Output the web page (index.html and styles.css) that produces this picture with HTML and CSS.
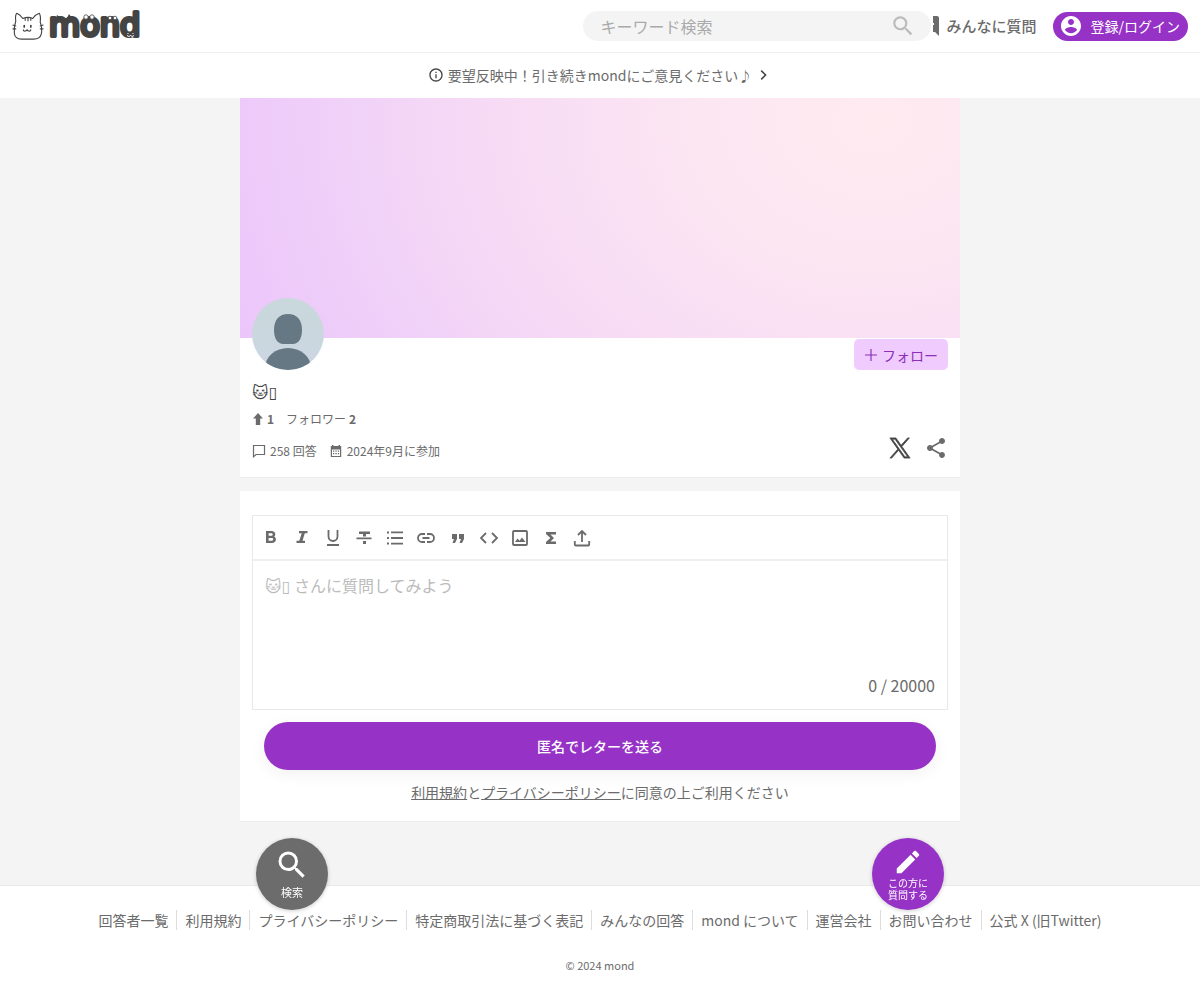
FILE: index.html
```html
<!DOCTYPE html>
<html lang="ja">
<head>
  <meta charset="UTF-8" />
  <meta name="viewport" content="width=device-width, initial-scale=1.0" />
  <title>mond</title>
  <link rel="stylesheet" href="styles.css">
</head>
<body>
  <header class="header">
    <a class="logo" href="#">
      <svg class="logo-cat" viewBox="0 0 34 32">
        <path d="M4 11C3.500 7 3.500 4 5 2.500C8 3.500 10 6 11.500 8C15 6.500 19 6.500 22 8C23.500 5.500 26 3.500 29 2.500C30.500 5 30.500 8 30 12C31.500 16 32 21 31 25C30 29 27 30 23 30H10C6 30 3 28 2.500 24C2 19 2.500 15 4 11Z"/>
        <path d="M14 8V10M17 7.500V10.500M20 8V10M1 15L4 16M1 19H4M30 16L33 15M30 19H33"/>
        <path d="M12 20C12 22 15 22 16 20C17 22 20 22 20 20"/>
        <path d="M13 15.500V17M20 15.500V17" stroke-width="1.800"/>
      </svg>
      <svg class="logo-word" viewBox="0 0 96 32">
        <text x="1" y="26">mond</text>
        <path d="M8 9L9 5L13 8ZM19 8L21 4L24 8Z" fill="#444"/>
        <g fill="#fff" stroke="#444" stroke-width=".8">
          <circle cx="38" cy="7" r="2.200"/><circle cx="44" cy="7" r="2.200"/>
          <circle cx="62" cy="8" r="1.800"/><circle cx="67" cy="8" r="1.800"/>
        </g>
        <path d="M80 23V24M85 23V24M79 25.500Q81 27.500 82.500 25.500Q84 27.500 86 25.500" fill="none" stroke="#fff" stroke-width="1"/>
      </svg>
    </a>
    <form class="search">
      <div class="search-box">
        <input type="search" aria-label="キーワード検索" placeholder="キーワード検索">
        <button type="button" aria-label="検索">
          <svg viewBox="0 0 24 24"><path d="M15.500 14h-.79l-.28-.27A6.470 6.470 0 0 0 16 9.500 6.500 6.500 0 1 0 9.500 16c1.610 0 3.090-.59 4.230-1.570l.27.28v.79l5 4.990L20.490 19l-4.990-5zm-6 0C7.010 14 5 11.990 5 9.500S7.010 5 9.500 5 14 7.010 14 9.500 11.990 14 9.500 14z"/></svg>
        </button>
      </div>
    </form>
    <a class="ask-all" href="#">
      <svg viewBox="0 0 24 24"><path fill-rule="evenodd" d="M20 2H4C2.900 2 2 2.900 2 4v12c0 1.100.9 2 2 2h14l4 4V4c0-1.100-.9-2-2-2zM7 9h2v2H7zm4 0h2v2h-2zm4 0h2v2h-2z"/></svg>
      <span>みんなに質問</span>
    </a>
    <a class="login" href="#">
      <svg viewBox="0 0 24 24"><path d="M12 2C6.480 2 2 6.480 2 12s4.480 10 10 10 10-4.480 10-10S17.520 2 12 2zm0 3c1.660 0 3 1.340 3 3s-1.340 3-3 3-3-1.340-3-3 1.340-3 3-3zm0 14.200c-2.500 0-4.710-1.280-6-3.220.03-1.990 4-3.080 6-3.080 1.990 0 5.970 1.090 6 3.080-1.290 1.940-3.500 3.220-6 3.220z"/></svg>
      <span>登録/ログイン</span>
    </a>
  </header>

  <a class="notice" href="#">
    <svg viewBox="0 0 24 24"><path d="M11 7h2v2h-2zm0 4h2v6h-2zm1-9C6.480 2 2 6.480 2 12s4.480 10 10 10 10-4.480 10-10S17.520 2 12 2zm0 18c-4.410 0-8-3.590-8-8s3.590-8 8-8 8 3.590 8 8-3.590 8-8 8z"/></svg>
    <span>要望反映中！引き続きmondにご意見ください♪</span>
    <svg viewBox="0 0 24 24"><path d="M8.590 4.600 7 6.200 12.800 12 7 17.800 8.590 19.400 16 12z"/></svg>
  </a>

  <main class="main">
    <section class="profile">
      <div class="cover"></div>
      <div class="profile-body">
        <div class="profile-top">
          <svg class="avatar" viewBox="0 0 72 72">
            <defs>
              <linearGradient id="avatarBg" x1="0" y1="0" x2="0" y2="1"><stop offset="0" stop-color="#c8d8db"/><stop offset="1" stop-color="#ccd6e2"/></linearGradient>
              <clipPath id="avatarClip"><circle cx="36" cy="36" r="36"/></clipPath>
            </defs>
            <g clip-path="url(#avatarClip)">
              <rect width="72" height="72" fill="url(#avatarBg)"/>
              <path d="M36 16C45 16 50 22 50 32C50 41 46 46 41 46H31C26 46 22 41 22 32C22 22 27 16 36 16Z" fill="#667884"/>
              <ellipse cx="36" cy="70" rx="23" ry="20" fill="#667884"/>
            </g>
          </svg>
          <button class="follow" type="button">
            <svg viewBox="0 0 14 14"><path d="M7 1v12M1 7h12" stroke="currentColor" stroke-width="1.200"/></svg>
            <span>フォロー</span>
          </button>
        </div>
        <h1 class="name">🐱▯</h1>
        <div class="stats">
          <span class="stat"><svg viewBox="0 0 12 12"><path d="M6 0l5 5.500H8.200V12H3.800V5.500H1z"/></svg><b>1</b></span>
          <span class="stat">フォロワー <b>2</b></span>
        </div>
        <div class="meta">
          <span class="stat"><svg viewBox="0 0 14 14"><path d="M1.500 1.500h11v9H4l-2.500 2.300z" fill="none" stroke="currentColor" stroke-width="1.200"/></svg>258 回答</span>
          <span class="stat"><svg viewBox="0 0 14 14"><path fill-rule="evenodd" d="M3 1h1.500v1h5V1H11v1h1.200v11H1.800V2H3zM3 5.500V12h8V5.500zM4 6.500h1.300v1.300H4zm2.400 0h1.300v1.300H6.400zm2.400 0h1.300v1.300H8.800zM4 9h1.300v1.300H4zm2.400 0h1.300v1.300H6.400zm2.400 0h1.300v1.300H8.800z"/></svg>2024年9月に参加</span>
          <div class="share">
            <a href="#" aria-label="X"><svg class="x-icon" viewBox="0 0 24 24"><path d="M14.095 10.316 22.286 1h-1.940L13.230 9.088 7.551 1H1l8.590 12.231L1 23h1.940l7.511-8.542L16.449 23H23l-8.905-12.684zm-2.658 3.022-.872-1.218L3.640 2.432h2.981l5.590 7.821.869 1.219 7.265 10.166h-2.982l-5.926-8.300z" stroke="#444" stroke-width=".8"/></svg></a>
            <a href="#" aria-label="シェア"><svg viewBox="0 0 24 24"><path d="M18 16.080c-.76 0-1.440.3-1.960.77L8.910 12.700c.05-.23.09-.46.09-.7s-.04-.47-.09-.7l7.050-4.110c.54.5 1.250.81 2.040.81 1.660 0 3-1.340 3-3s-1.340-3-3-3-3 1.340-3 3c0 .24.04.47.09.7L8.040 9.810C7.500 9.310 6.790 9 6 9c-1.660 0-3 1.340-3 3s1.340 3 3 3c.79 0 1.500-.31 2.040-.81l7.120 4.160c-.05.21-.08.43-.08.65 0 1.610 1.310 2.920 2.920 2.920s2.920-1.310 2.920-2.920-1.310-2.920-2.920-2.920z"/></svg></a>
          </div>
        </div>
      </div>
    </section>

    <form class="letter">
      <div class="editor">
        <div class="toolbar">
          <button type="button" aria-label="太字"><svg viewBox="0 0 20 20"><path fill-rule="evenodd" d="M5 3h5.600c2.200 0 3.700 1.300 3.700 3.200 0 1.100-.5 1.900-1.300 2.400 1.200.5 1.900 1.500 1.900 2.900 0 2.200-1.600 3.500-4 3.500H5zm2.600 2.200v2.600h2.700c.9 0 1.400-.5 1.400-1.300s-.5-1.300-1.400-1.300zm0 4.700v2.900h3c1 0 1.600-.6 1.600-1.500s-.6-1.400-1.600-1.400z"/></svg></button>
          <button type="button" aria-label="斜体"><svg viewBox="0 0 20 20"><path d="M7 3h8.500v2.200h-2.700L10.500 12.800H13V15H4.500v-2.200h2.800l2.400-7.600H7z"/></svg></button>
          <button type="button" aria-label="下線"><svg class="line" viewBox="0 0 20 20"><path d="M5.500 2v6.500a4.500 4.500 0 0 0 9 0V2M4 17h12"/></svg></button>
          <button type="button" aria-label="取り消し線"><svg viewBox="0 0 20 20"><path d="M5 3.500h11V6h-4v2.500H9V6H5zM2.500 9.500h15v1.700h-15zM9 13h3v3H9z"/></svg></button>
          <button type="button" aria-label="リスト"><svg viewBox="0 0 20 20"><path d="M6 3.500h12v1.800H6zm0 5.600h12v1.800H6zm0 5.600h12v1.800H6zM2 3.400h2v2H2zm0 5.600h2v2H2zm0 5.600h2v2H2z"/></svg></button>
          <button type="button" aria-label="リンク"><svg class="line" viewBox="0 0 20 20"><path d="M9 6H6a4 4 0 0 0 0 8h3M11 6h3a4 4 0 0 1 0 8h-3M6.500 10h7"/></svg></button>
          <button type="button" aria-label="引用"><svg viewBox="0 0 20 20"><path d="M4 6h5v5l-2 4H4.500L6 11H4zM11 6h5v5l-2 4h-2.500L13 11h-2z"/></svg></button>
          <button type="button" aria-label="コード"><svg class="line" viewBox="0 0 20 20"><path d="M7 5l-5 5 5 5M13 5l5 5-5 5"/></svg></button>
          <button type="button" aria-label="画像"><svg class="line" viewBox="0 0 20 20"><rect x="3" y="3" width="14" height="14" rx="1"/><path d="M5 14l2.500-3.500 2 2.200 2.500-3.200 3.500 4.500z" fill="currentColor" stroke="none"/></svg></button>
          <button type="button" aria-label="数式"><svg viewBox="0 0 20 20"><path d="M5 4h10v2.500H9.500L13 10l-3.500 3.500H15V16H5v-2l4.300-4L5 6z"/></svg></button>
          <button type="button" aria-label="アップロード"><svg class="line" viewBox="0 0 20 20"><path d="M10 14V3M6 7l4-4 4 4M2.800 13v3.500q0 1 1 1h12.400q1 0 1-1V13"/></svg></button>
        </div>
        <textarea aria-label="質問" placeholder="🐱▯ さんに質問してみよう"></textarea>
        <div class="counter">0 / 20000</div>
      </div>
      <button class="send" type="button">匿名でレターを送る</button>
      <p class="terms"><a href="#">利用規約</a>と<a href="#">プライバシーポリシー</a>に同意の上ご利用ください</p>
    </form>
  </main>

  <footer class="footer">
    <nav class="footer-links">
      <a href="#">回答者一覧</a>
      <a href="#">利用規約</a>
      <a href="#">プライバシーポリシー</a>
      <a href="#">特定商取引法に基づく表記</a>
      <a href="#">みんなの回答</a>
      <a href="#">mond について</a>
      <a href="#">運営会社</a>
      <a href="#">お問い合わせ</a>
      <a href="#">公式 X (旧Twitter)</a>
    </nav>
    <small>© 2024 mond</small>
  </footer>

  <div class="floating">
    <button class="fab fab-search" type="button">
      <svg viewBox="0 0 24 24"><path d="M15.500 14h-.79l-.28-.27A6.470 6.470 0 0 0 16 9.500 6.500 6.500 0 1 0 9.500 16c1.610 0 3.090-.59 4.230-1.570l.27.28v.79l5 4.990L20.490 19l-4.990-5zm-6 0C7.010 14 5 11.990 5 9.500S7.010 5 9.500 5 14 7.010 14 9.500 11.990 14 9.500 14z"/></svg>
      <span>検索</span>
    </button>
    <button class="fab fab-ask" type="button">
      <svg viewBox="0 0 24 24"><path d="M3 17.250V21h3.750L17.810 9.940l-3.750-3.750L3 17.250zM20.710 7.040c.39-.39.39-1.020 0-1.410l-2.340-2.340c-.39-.39-1.020-.39-1.410 0l-1.830 1.830 3.750 3.750 1.830-1.830z"/></svg>
      <span>この方に<br>質問する</span>
    </button>
  </div>
</body>
</html>
```
FILE: styles.css
```css
* {
  box-sizing: border-box;
}
body {
  margin: 0;
  font-family: "Noto Sans CJK JP", "DejaVu Sans", sans-serif;
  font-size: 14px;
  line-height: 20px;
  background: #f4f4f4;
  color: #6b6b6b;
}
a {
  color: inherit;
  text-decoration: none;
}
button {
  border: none;
  padding: 0;
  background: none;
  color: inherit;
  font: inherit;
  cursor: pointer;
}
svg {
  display: block;
  flex: none;
  fill: currentColor;
}

.header {
  display: flex;
  align-items: center;
  height: 53px;
  padding: 0 12px;
  background: #fff;
  border-bottom: 1px solid #eee;
}
.logo {
  display: flex;
  align-items: center;
  gap: 4px;
  margin-right: auto;
  color: #444;
}
.logo-cat {
  width: 32px;
  height: 32px;
  fill: none;
  stroke: #444;
  stroke-width: 1.2;
  stroke-linecap: round;
  stroke-linejoin: round;
}
.logo-word {
  width: 96px;
  height: 32px;
  overflow: visible;
}
.logo-word text {
  font-family: "DejaVu Sans", sans-serif;
  font-size: 32px;
  stroke: #444;
  stroke-width: 4px;
  stroke-linejoin: round;
}
.search {
  position: relative;
  z-index: 1;
  width: 350px;
  padding-right: 2px;
  background: #fff;
}
.search-box {
  display: flex;
  align-items: center;
  height: 30px;
  padding: 0 15px;
  border-radius: 15px;
  background: #f4f4f4;
}
.search-box input {
  flex: 1;
  min-width: 0;
  padding: 0 2px;
  border: none;
  outline: none;
  background: none;
  font: inherit;
  font-size: 16px;
}
.search-box input::placeholder {
  color: #aaa;
}
.search-box button {
  color: #bbb;
}
.search-box svg {
  width: 26px;
  height: 26px;
}
.ask-all {
  display: flex;
  align-items: center;
  gap: 5px;
  margin: 0 16px 0 -16px;
  font-size: 15px;
  font-weight: 500;
}
.ask-all svg {
  width: 24px;
  height: 24px;
}
.login {
  display: flex;
  align-items: center;
  gap: 8px;
  height: 29px;
  padding: 0 8px 0 6px;
  border-radius: 15px;
  background: #9632c6;
  color: #fff;
}
.login svg {
  width: 24px;
  height: 24px;
}

.notice {
  display: flex;
  align-items: center;
  justify-content: center;
  gap: 4px;
  height: 45px;
  padding-bottom: 2px;
  background: #fff;
}
.notice svg {
  width: 16px;
  height: 16px;
  color: #444;
}

.main {
  max-width: 720px;
  margin: 0 auto;
}
.profile {
  background: #fff;
  border-bottom: 1px solid #eee;
}
.cover {
  height: 240px;
  background: radial-gradient(ellipse 700px 560px at 88% 10%, #ffeaf0 0, #fce6f2 25%, #f6d9f5 58%, #efcff9 80%, #ebc5fb 100%);
}
.profile-body {
  padding: 0 12px 11px;
}
.profile-top {
  display: flex;
  align-items: flex-start;
  justify-content: space-between;
  height: 32px;
}
.avatar {
  width: 72px;
  height: 72px;
  margin-top: -40px;
}
.follow {
  display: flex;
  align-items: center;
  gap: 4px;
  height: 31px;
  margin-top: 1px;
  padding: 0 10px;
  border-radius: 5px;
  background: #efccfd;
  color: #8c2fb9;
}
.follow svg {
  width: 14px;
  height: 14px;
}
.name {
  margin: 7px 0 0;
  font-size: 16px;
  font-weight: 400;
  line-height: 28px;
  color: #444;
}
.stats, .meta {
  display: flex;
  align-items: center;
  gap: 12px;
  font-size: 12px;
}
.stats {
  margin-top: 4px;
}
.stat {
  display: flex;
  align-items: center;
  gap: 4px;
}
.stat svg {
  width: 14px;
  height: 14px;
}
.stats .stat {
  gap: 3px;
}
.stats .stat svg {
  width: 12px;
  height: 12px;
}
.meta {
  margin-top: 7px;
  height: 30px;
}
.share {
  display: flex;
  gap: 12px;
  margin: 0 0 6px auto;
}
.share svg {
  width: 24px;
  height: 24px;
}
.share .x-icon {
  padding: 1px;
  color: #444;
}

.letter {
  margin-top: 13px;
  padding: 24px 12px 19px;
  background: #fff;
  border-bottom: 1px solid #eee;
}
.editor {
  border: 1px solid #e8e8e8;
}
.toolbar {
  display: grid;
  grid-template-columns: repeat(11, 1fr);
  align-items: center;
  width: 345px;
  height: 43px;
  padding-left: 2px;
}
.toolbar button {
  display: flex;
  justify-content: center;
}
.toolbar svg {
  width: 20px;
  height: 20px;
}
.toolbar .line {
  fill: none;
  stroke: currentColor;
  stroke-width: 1.8;
}
.editor textarea {
  display: block;
  width: 100%;
  height: 110px;
  padding: 11px 12px;
  border: none;
  border-top: 2px solid #eee;
  outline: none;
  resize: none;
  font: inherit;
  font-size: 16px;
  line-height: 26px;
}
.editor textarea::placeholder {
  color: #bbb;
}
.counter {
  padding: 4px 12px 12px;
  font-size: 16px;
  line-height: 24px;
  text-align: right;
}
.send {
  display: block;
  width: calc(100% - 24px);
  height: 48px;
  margin: 12px auto;
  border-radius: 24px;
  background: #9632c6;
  box-shadow: 0 4px 16px rgba(0, 0, 0, 0.06);
  color: #fff;
  font-weight: 500;
}
.terms {
  margin: 0;
  text-align: center;
}
.terms a {
  text-decoration: underline;
}

.footer {
  display: flex;
  flex-direction: column;
  align-items: center;
  gap: 25px;
  margin-top: 63px;
  padding: 24px 12px 25px;
  background: #fff;
  border-top: 1px solid #e8e8e8;
}
.footer-links {
  display: flex;
  flex-wrap: wrap;
  justify-content: center;
}
.footer-links a {
  padding: 0 8px;
}
.footer-links a + a {
  border-left: 1px solid #ddd;
}
.footer small {
  font-size: 11px;
}

.floating {
  position: fixed;
  right: 0;
  bottom: 90px;
  left: 0;
  display: flex;
  justify-content: space-between;
  max-width: 720px;
  margin: 0 auto;
  padding: 0 16px;
  pointer-events: none;
}
.fab {
  display: flex;
  flex-direction: column;
  align-items: center;
  justify-content: center;
  width: 72px;
  height: 72px;
  border-radius: 50%;
  box-shadow: 0 1px 4px rgba(0, 0, 0, 0.2);
  color: #fff;
  font-size: 10px;
  line-height: 12px;
  pointer-events: auto;
}
.fab-search {
  background: #6c6c6c;
  font-size: 11px;
  line-height: 18px;
}
.fab-search svg {
  width: 36px;
  height: 36px;
}
.fab-ask {
  background: #9632c6;
}
.fab-ask svg {
  width: 30px;
  height: 30px;
}
```
